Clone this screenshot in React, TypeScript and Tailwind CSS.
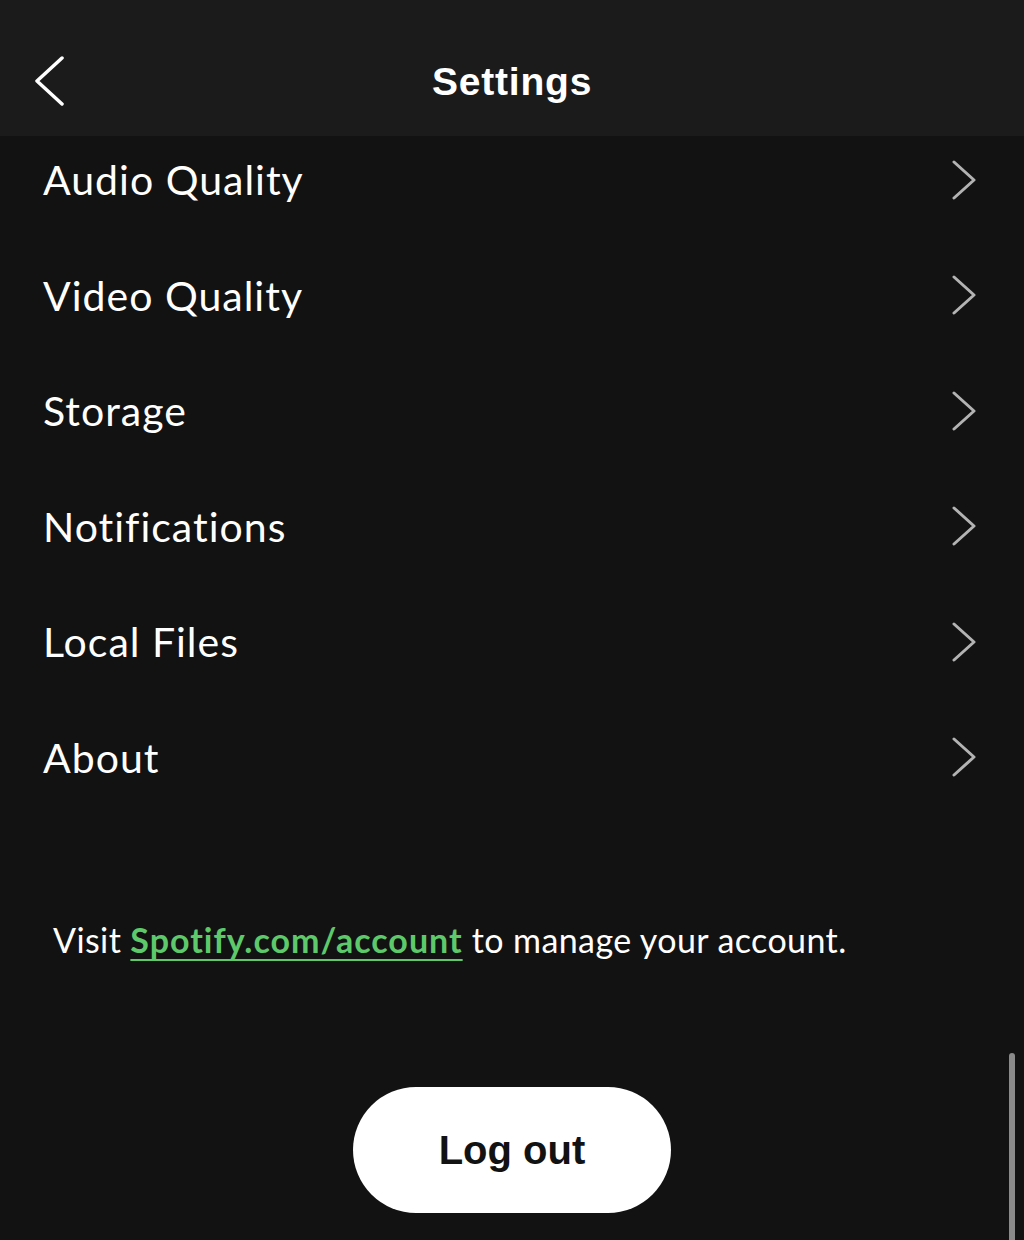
import React from "react";

const items = ["Audio Quality", "Video Quality", "Storage", "Notifications", "Local Files", "About"];

function Chevron({ className = "" }: { className?: string }) {
  return (
    <svg viewBox="0 0 24 40" className={className} fill="none" stroke="currentColor" strokeWidth={3} strokeLinecap="round" strokeLinejoin="round">
      <path d="M2 2 L22 20 L2 38" />
    </svg>
  );
}

export default function App() {
  return (
    <div className="w-[1024px] h-[1240px] bg-[#121212] overflow-hidden relative" style={{ fontFamily: "Lato, 'Noto Sans', sans-serif" }}>
      <div className="relative z-10 h-[136px] bg-[#1b1b1b] flex items-start justify-center pt-[56px]">
        <svg viewBox="0 0 30 50" className="absolute left-[34px] top-[56px] w-[30px] h-[50px] text-white" fill="none" stroke="currentColor" strokeWidth={3.5} strokeLinecap="round" strokeLinejoin="round">
          <path d="M28 2 L3 25 L28 48" />
        </svg>
        <span className="text-white text-[39px] leading-[52px] font-bold tracking-[0.8px]" style={{ fontFamily: "'Liberation Sans', Arial, sans-serif" }}>Settings</span>
      </div>
      <div className="-mt-[14px]">
        {items.map((t) => (
          <div key={t} className="h-[115.5px] flex items-center justify-between pl-[43px] pr-[48px]">
            <span className="text-white text-[41px] tracking-[1px]">{t}</span>
            <Chevron className="w-[24px] h-[40px] text-[#b3b3b3]" />
          </div>
        ))}
      </div>
      <div className="mt-[99px] pl-[53px] text-white text-[34px] tracking-[0.4px]">
        Visit{" "}
        <span className="text-[#5dc96a] underline underline-offset-[6px] decoration-[2px] font-bold tracking-[1px]">Spotify.com/account</span>{" "}
        to manage your account.
      </div>
      <div className="mt-[122px] flex justify-center">
        <div className="w-[318px] h-[126px] rounded-full bg-white flex items-center justify-center">
          <span className="text-[#121212] text-[40px] font-bold" style={{ fontFamily: "'Liberation Sans', Arial, sans-serif" }}>Log out</span>
        </div>
      </div>
      <div className="absolute right-[9px] top-[1053px] w-[6px] h-[200px] rounded-full bg-[#8a8a8a]" />
    </div>
  );
}
